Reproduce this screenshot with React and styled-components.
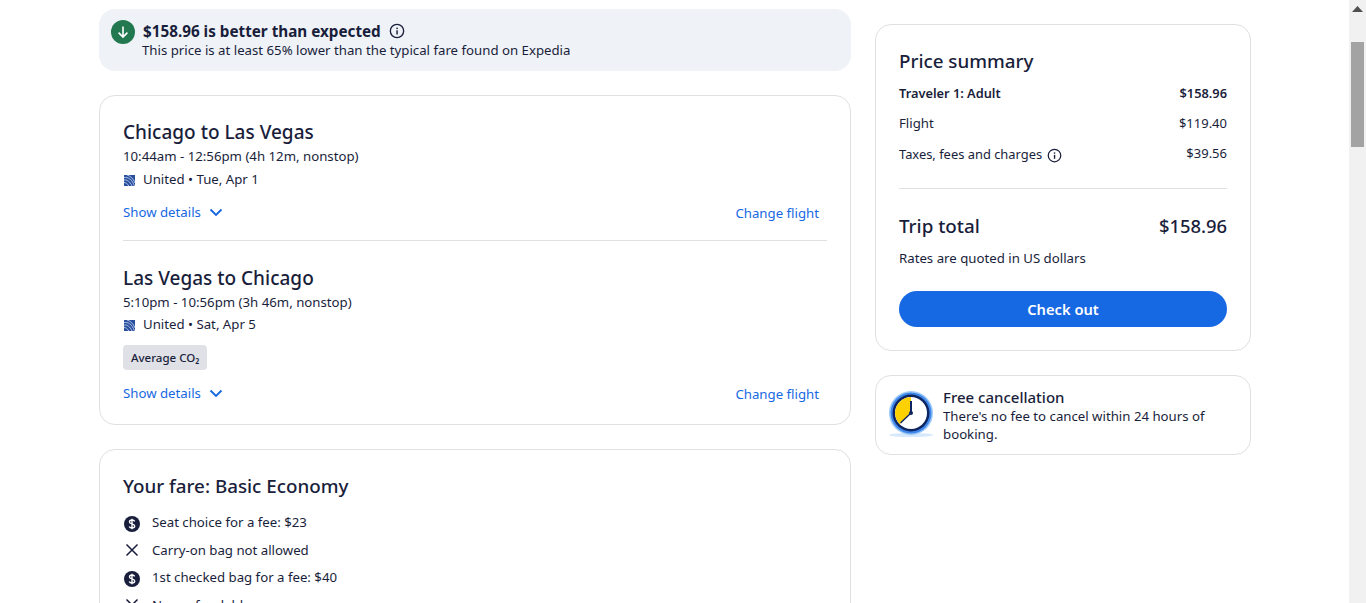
import React from "react";
import styled, { createGlobalStyle } from "styled-components";

const Global = createGlobalStyle`
  html, body { margin: 0; padding: 0; height: 603px; overflow: hidden; background: #fff; }
  body { font-family: "Noto Sans", "Open Sans", "Liberation Sans", sans-serif; color: #191e3b; font-size: 13.22px; }
  * { box-sizing: border-box; }
`;

const Page = styled.div`
  display: flex; align-items: flex-start; gap: 24px;
  width: 1366px; height: 603px; overflow: hidden;
  padding: 9px 0 0 99px;
`;
const Main = styled.main`
  width: 752px; flex: none; display: flex; flex-direction: column; gap: 24px;
`;
const Side = styled.aside`
  width: 376px; flex: none; display: flex; flex-direction: column; gap: 24px; padding-top: 15px;
`;
const Banner = styled.div`
  height: 62px; background: #eff2f7; border-radius: 16px;
  display: flex; align-items: flex-start; gap: 8px; padding: 11px 12px;
`;
const GreenDot = styled.span`
  width: 24px; height: 24px; border-radius: 50%; background: #227950; flex: none;
  display: flex; align-items: center; justify-content: center;
`;
const BannerTitle = styled.div`
  font-size: 15.25px; font-weight: 700; line-height: 22px; display: flex; align-items: center; gap: 8px;
`;
const BannerSub = styled.div`line-height: 17px; margin-left: -1px;`;
const Card = styled.section`
  border: 1px solid #dfe0e4; border-radius: 16px; background: #fff;
  padding: ${p => p.$pad || "22px 23px 21px"};
  height: ${p => p.$h || "auto"};
`;
const H2 = styled.h2`
  margin: 0; font-size: ${p => p.$size || 19}px; font-weight: 500; line-height: 28px; color: #191e3b;
`;
const Line = styled.div`line-height: 20px; margin-top: ${p => p.$mt || 0}px;`;
const Airline = styled(Line)`display: flex; align-items: center; gap: 7px;`;
const Actions = styled.div`
  display: flex; justify-content: space-between; padding-right: 8px; height: 20px;
  margin-top: 13px; line-height: 20px; color: #1668e3;
`;
const More = styled.span`display: flex; align-items: center; align-self: flex-start; gap: 8px;`;
const Change = styled.span`padding-top: 1px;`;
const Rule = styled.hr`border: 0; border-top: 1px solid #dfe0e4; margin: ${p => p.$m || "18px 0 23px"};`;
const Badge = styled.span`
  display: inline-block; margin-top: 11px; height: 25px; line-height: 25px; padding: 0 8px;
  background: #e0e1e6; border-radius: 4px; font-size: 11.5px; font-weight: 500;
`;
const Fare = styled.ul`list-style: none; margin: 8.4px 0 0; padding: 0;`;
const FareItem = styled.li`
  display: flex; align-items: center; gap: 11px; height: 27.6px; line-height: 20px;
`;
const FareIcon = styled.span`width: 18px; height: 18px; flex: none; display: flex; margin-top: ${p => p.$mt || 0}px;`;

const Row = styled.div`
  display: flex; justify-content: space-between; align-items: ${p => p.$top ? "flex-start" : "center"};
  line-height: 20px; margin-top: ${p => p.$mt || 0}px; font-weight: ${p => p.$bold ? 600 : 400};
  font-size: ${p => p.$bold ? "12.8px" : "inherit"};
`;
const Amount = styled.span`font-size: 13px; margin-top: ${p => p.$up ? -1 : 0}px;`;
const Inline = styled.span`display: inline-flex; align-items: center; gap: 5px; font-size: 12.9px;`;
const Total = styled(Row)`font-size: 18.8px; font-weight: 500; line-height: 28px;`;
const TotalAmount = styled.span`font-size: 18.4px;`;
const CheckOut = styled.button`
  display: block; width: 100%; height: 36px; border: 0; border-radius: 18px; background: #1668e3;
  color: #fff; font: 600 14.7px "Noto Sans", sans-serif; margin-top: 23px; padding: 0;
`;
const PromoCard = styled(Card)`display: flex; gap: 8px; align-items: center;`;
const PromoTitle = styled.div`font-size: 15px; font-weight: 500; line-height: 20px;`;
const PromoText = styled.div`line-height: 18px;`;

const Scrollbar = styled.div`
  position: fixed; top: 0; right: 0; width: 17px; height: 603px; background: #f1f1f1;
`;
const ScrollUp = styled.svg`position: absolute; top: 6px; left: 3px;`;
const Thumb = styled.div`
  position: absolute; top: 42px; left: 2px; width: 13px; height: 105px; background: #a3a3a3;
`;

const Info = ({ s = 16 }) => (
  <svg width={s} height={s} viewBox="0 0 24 24" fill="none" style={{ flex: "none", marginTop: s === 15 ? 2 : 0 }}>
    <circle cx="12" cy="12" r="10" stroke="#191e3b" strokeWidth="2" />
    <rect x="11" y="11" width="2.2" height="6.2" fill="#191e3b" />
    <rect x="11" y="7" width="2.2" height="2.2" fill="#191e3b" />
  </svg>
);
const DownArrow = () => (
  <svg width="14" height="14" viewBox="0 0 14 14" fill="none" stroke="#fff" strokeWidth="1.6">
    <path d="M7 1.500v10.500M2.600 7.600 7 12l4.400-4.400" />
  </svg>
);
const Chevron = () => (
  <svg width="14" height="9" viewBox="0 0 14 9" fill="none" stroke="#1668e3" strokeWidth="1.9">
    <path d="M1.500 1.500 7 7l5.500-5.500" />
  </svg>
);
const UnitedLogo = () => (
  <svg width="13" height="13" viewBox="0 0 13 13" style={{ flex: "none", marginTop: 2 }}>
    <rect x="1" y="1" width="11" height="11" fill="#2a4f9f" />
    <path d="M1 3.500C5 3 9 5 11.500 12M1 6c3-.5 6 1.500 8 6M1 8.500c2 0 3.600 1.200 4.800 3.500M4 1c3 .8 6.500 3.500 8 8" stroke="#cfdcf2" strokeWidth=".8" fill="none" />
  </svg>
);
const Dollar = () => (
  <svg width="18" height="18" viewBox="0 0 18 18">
    <circle cx="9" cy="9" r="8" fill="#191e3b" />
    <path d="M11.700 6.400C11.200 5.400 10.200 5 9 5 7.500 5 6.500 5.800 6.500 6.900 6.500 9.500 11.700 8.300 11.700 11 11.700 12.200 10.600 13 9 13 7.700 13 6.700 12.500 6.200 11.500M9 3.800v10.400" stroke="#fff" strokeWidth="1.400" fill="none" />
  </svg>
);
const Cross = () => (
  <svg width="18" height="18" viewBox="0 0 18 18" stroke="#191e3b" strokeWidth="1.500">
    <path d="M3.500 3.500l11 11M14.500 3.500l-11 11" />
  </svg>
);
const Clock = () => (
  <svg width="48" height="48" viewBox="0 0 48 48" style={{ flex: "none", marginLeft: -12 }}>
    <ellipse cx="24" cy="44" rx="22" ry="2" fill="#d6e9fc" />
    <circle cx="24" cy="22" r="22" fill="#9cc9f7" />
    <circle cx="24" cy="22" r="20.500" fill="#3f86ea" />
    <circle cx="24" cy="22" r="18.500" fill="#0d2560" />
    <circle cx="24" cy="22" r="16" fill="#fff" />
    <path d="M24 22V6A16 16 0 0 0 12.700 33.300Z" fill="#fdd000" />
    <path d="M24 22 13.500 32" stroke="#0d2560" strokeWidth="1.400" fill="none" />
    <rect x="23" y="10" width="2" height="12" fill="#0d2560" />
    <circle cx="24" cy="22" r="2" fill="#0d2560" />
  </svg>
);

const Flight = ({ route, time, date, first, badge }) => (
  <>
    <H2>{route}</H2>
    <Line>{time}</Line>
    <Airline $mt={first ? 3 : 2}><UnitedLogo />{date}</Airline>
    {badge && <Badge>Average CO₂</Badge>}
    <Actions>
      <More>Show details <Chevron /></More>
      <Change>Change flight</Change>
    </Actions>
  </>
);

export default function App() {
  return (
    <>
      <Global />
      <Page>
        <Main>
          <Banner>
            <GreenDot><DownArrow /></GreenDot>
            <div>
              <BannerTitle>$158.96 is better than expected <Info /></BannerTitle>
              <BannerSub>This price is at least 65% lower than the typical fare found on Expedia</BannerSub>
            </div>
          </Banner>
          <Card>
            <Flight first route="Chicago to Las Vegas" time="10:44am - 12:56pm (4h 12m, nonstop)" date="United • Tue, Apr 1" />
            <Rule />
            <Flight badge route="Las Vegas to Chicago" time="5:10pm - 10:56pm (3h 46m, nonstop)" date="United • Sat, Apr 5" />
          </Card>
          <Card>
            <H2 $size={18.8}>Your fare: Basic Economy</H2>
            <Fare>
              <FareItem><FareIcon $mt={3}><Dollar /></FareIcon>Seat choice for a fee: $23</FareItem>
              <FareItem><FareIcon><Cross /></FareIcon>Carry-on bag not allowed</FareItem>
              <FareItem><FareIcon $mt={3}><Dollar /></FareIcon>1st checked bag for a fee: $40</FareItem>
              <FareItem><FareIcon><Cross /></FareIcon>Non-refundable</FareItem>
            </Fare>
          </Card>
        </Main>
        <Side>
          <Card $h="327px">
            <H2 $size={18.8}>Price summary</H2>
            <Row $bold $mt={8}><span>Traveler 1: Adult</span><span>$158.96</span></Row>
            <Row $mt={10}><span>Flight</span><Amount>$119.40</Amount></Row>
            <Row $top $mt={11}><Inline>Taxes, fees and charges <Info s={15} /></Inline><Amount $up>$39.56</Amount></Row>
            <Rule $m="24px 0 23px" />
            <Total><span>Trip total</span><TotalAmount>$158.96</TotalAmount></Total>
            <Row $mt={8}><span>Rates are quoted in US dollars</span></Row>
            <CheckOut>Check out</CheckOut>
          </Card>
          <PromoCard $pad="11px 23px 11px 23px" $h="80px">
            <Clock />
            <div>
              <PromoTitle>Free cancellation</PromoTitle>
              <PromoText>There's no fee to cancel within 24 hours of booking.</PromoText>
            </div>
          </PromoCard>
        </Side>
      </Page>
      <Scrollbar>
        <ScrollUp width="11" height="7" viewBox="0 0 11 7"><path d="M5.500 0 11 6H0Z" fill="#505050" /></ScrollUp>
        <Thumb />
      </Scrollbar>
    </>
  );
}
